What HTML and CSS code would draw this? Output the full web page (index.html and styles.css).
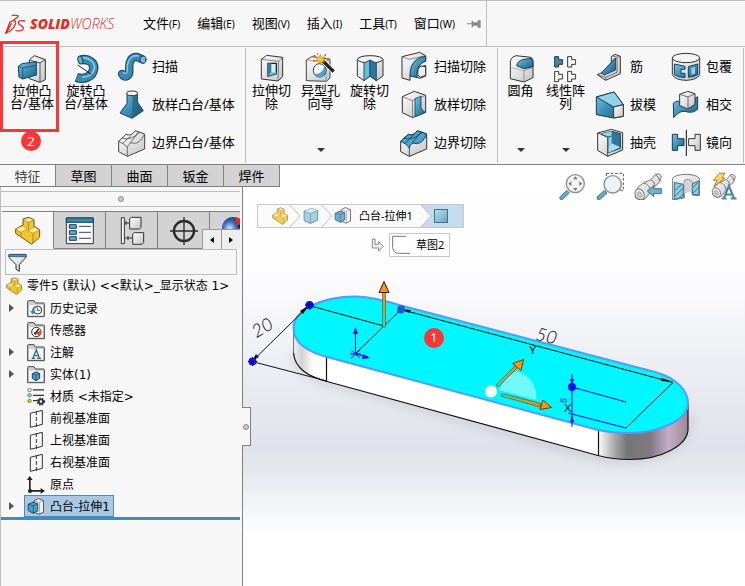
FILE: index.html
```html
<!DOCTYPE html>
<html lang="zh-CN">
<head>
<meta charset="utf-8">
<title>SOLIDWORKS</title>
<link rel="stylesheet" href="styles.css">
</head>
<body>
<svg class="defs" aria-hidden="true">
  <defs>
    <linearGradient id="blue" x1="0" y1="0" x2="1" y2="1"><stop offset="0" stop-color="#7cc6e8"/><stop offset=".5" stop-color="#3d8fb8"/><stop offset="1" stop-color="#23607f"/></linearGradient>
    <linearGradient id="grey" x1="0" y1="0" x2="1" y2="1"><stop offset="0" stop-color="#ffffff"/><stop offset="1" stop-color="#c4c4c4"/></linearGradient>
    <radialGradient id="ball" cx=".35" cy=".5" r=".6"><stop offset="0" stop-color="#d5e6fa"/><stop offset=".5" stop-color="#3569b8"/><stop offset="1" stop-color="#14306a"/></radialGradient>
    <symbol id="part" viewBox="45 165 81 87">
      <path d="M50 204 72 192V174L88 169 105 176V196L122 206V228L98 250 50 217Z" fill="#f2c62c" stroke="#6e5410" stroke-width="3" stroke-linejoin="round"/>
      <path d="M72 176 88 170 105 177 88 184ZM50 204 72 194 84 205 66 214ZM86 208 105 198 122 207 102 217Z" fill="#ffeb9c" stroke="#8a6c18" stroke-width="1.5"/>
      <path d="M88 184V206M102 217V247M66 214V226" stroke="#8a6c18" stroke-width="2" fill="none"/>
    </symbol>
    <symbol id="folder" viewBox="81 75 54 54">
      <path d="M83 84V79Q83 77 86 77H102L106 84H130Q133 84 133 87V125H83Z" fill="#d2d2d2" stroke="#444" stroke-width="3"/>
      <path d="M87 90H129V121H87Z" fill="#f5f5f5"/>
    </symbol>
    <symbol id="plane" viewBox="81 27 54 54">
      <path d="M91 37 127 28V70L91 79Z" fill="#f8f8f8" stroke="#333" stroke-width="3"/>
      <path d="M109 30V80" stroke="#333" stroke-width="3" stroke-dasharray="12 6"/>
    </symbol>
    <symbol id="boss" viewBox="78 289 60 60">
      <path d="M102 298 116 291 133 298V336L118 343 102 337Z" fill="#f4f4f4" stroke="#444" stroke-width="3"/>
      <path d="M102 298 120 304 133 298M120 304V342" fill="none" stroke="#777" stroke-width="2"/>
      <path d="M82 310 98 303 114 308V332L99 340 82 331Z" fill="#4aa0c8" stroke="#173e55" stroke-width="3"/>
      <path d="M82 310 99 315 114 308M99 315V340" fill="none" stroke="#173e55" stroke-width="2"/>
    </symbol>
    <symbol id="cube" viewBox="170 124 56 60">
      <path d="M175 138 200 129 220 136V168L196 179 175 169Z" fill="#8fc7de" stroke="#456b7c" stroke-width="3"/>
      <path d="M175 138 196 146 220 136 200 129Z" fill="#c8e8f4"/><path d="M175 138 196 146 220 136M196 146V179" fill="none" stroke="#456b7c" stroke-width="2"/>
    </symbol>
    <symbol id="chevron" viewBox="0 0 12 22"><path d="M0 -1 11 11 0 23" fill="#fafafa" stroke="#bdbdbd"/></symbol>
    <symbol id="tee" viewBox="0 0 28 36"><path d="M2 2H14V11H26V25H14V33H2Z" stroke-width="3"/></symbol>
    <symbol id="telescope" viewBox="415 390 90 96">
      <path d="M428 440 446 425 468 416 482 400Q492 394 499 405L494 424 474 441 452 473Q430 484 420 466Z" fill="url(#grey)" stroke="#777" stroke-width="3"/>
      <ellipse cx="434" cy="460" rx="13" ry="17" fill="#eee" stroke="#777" stroke-width="3" transform="rotate(-30 434 460)"/>
      <ellipse cx="434" cy="461" rx="6" ry="9" fill="#ccc" stroke="#888" stroke-width="2" transform="rotate(-30 434 461)"/>
      <path d="M446 426Q464 430 466 450M468 416Q480 422 480 436M482 402Q492 406 494 420" fill="none" stroke="#777" stroke-width="3"/>
    </symbol>
  </defs>
</svg>

<div class="app">
  <header class="menubar">
    <div class="logo">
      <svg class="logo-mark" viewBox="12 30 66 66" fill="none" stroke="#d8322c" stroke-width="4" stroke-linecap="round" stroke-linejoin="round"><path d="M37 37H50Q57 37 53 42L41 52M30 57Q36 53 42 53Q50 54 45 66Q38 83 17 91ZM34 62 20 88M74 54Q57 51 55 58Q55 63 62 67Q73 73 69 79Q65 85 48 83" /></svg>
      <span class="logo-text"><b>SOLID</b>WORKS</span>
    </div>
    <nav class="menus">
      <button>文件<small>(F)</small></button>
      <button>编辑<small>(E)</small></button>
      <button>视图<small>(V)</small></button>
      <button>插入<small>(I)</small></button>
      <button>工具<small>(T)</small></button>
      <button>窗口<small>(W)</small></button>
    </nav>
    <button class="pin" aria-label="固定"><svg viewBox="0 0 42 30"><path d="M0 13H14V16H0ZM14 5H18V10H32V4H41V26H32V20H18V25H14Z" fill="#888"/></svg></button>
  </header>

  <section class="ribbon">
    <div class="group g1">
      <button class="big"><svg viewBox="48 156 96 96"><path d="M88 180 103 167 136 179V239L120 247 88 236Z" fill="url(#grey)" stroke="#333" stroke-width="3"/><path d="M88 180 120 189 136 179M120 189V247" fill="none" stroke="#555" stroke-width="3"/><path d="M55 199 66 191 109 185V225L68 237 57 231Z" fill="url(#blue)" stroke="#173e55" stroke-width="3"/><path d="M55 199 68 204 109 196M68 204V237" fill="none" stroke="#173e55" stroke-width="2"/></svg><span>拉伸凸<br>台/基体</span></button>
      <button class="big"><svg viewBox="209 156 96 96" fill="none"><path d="M242 180C262 174 283 187 280 207C277 231 250 240 228 232" stroke="#173e55" stroke-width="28"/><path d="M242 180C262 174 283 187 280 207C277 231 250 240 229 232" stroke="#3989b2" stroke-width="22"/><path d="M246 174C266 172 286 188 282 206C279 222 262 233 246 231" stroke="#8bcdea" stroke-width="5"/><ellipse cx="240" cy="180" rx="7" ry="12" fill="#5cb0d8" stroke="#173e55" stroke-width="3" transform="rotate(-15 240 180)"/><path d="M232 195 273 223" stroke="#222" stroke-width="3"/></svg><span>旋转凸<br>台/基体</span></button>
      <div class="col">
        <button class="row"><svg viewBox="351 153 90 90" fill="none" stroke-linecap="round"><path d="M366 222C374 238 390 228 388 208C386 182 396 168 412 171L426 178" stroke="#173e55" stroke-width="25"/><path d="M366 222C374 238 390 228 388 208C386 182 396 168 412 171L426 178" stroke="#3989b2" stroke-width="19"/><path d="M370 218C384 226 382 210 382 196C385 176 398 164 414 168" stroke="#88cbe8" stroke-width="4"/><ellipse cx="429" cy="179" rx="9" ry="11" fill="#6fbfe2" stroke="#173e55" stroke-width="3"/></svg>扫描</button>
        <button class="row"><svg viewBox="354 267 90 90"><path d="M384 280V310L363 339 399 355 433 332 415 306V280Z" fill="url(#blue)" stroke="#173e55" stroke-width="3"/><path d="M400 288V354L433 332 415 306V282Z" fill="#1f5878" opacity=".6"/><ellipse cx="399.500" cy="280" rx="16" ry="7" fill="#f2f2f2" stroke="#333" stroke-width="3"/></svg>放样凸台/基体</button>
        <button class="row"><svg viewBox="351 381 90 90"><path d="M356 424 378 403Q393 410 406 392L434 402V447L382 469 356 455Z" fill="url(#grey)" stroke="#444" stroke-width="3"/><path d="M356 424Q374 432 382 442Q388 424 403 430Q420 430 434 402M382 442V469M365 414Q392 424 420 396M368 430 394 406M391 429 415 396" fill="none" stroke="#555" stroke-width="2.500"/></svg>边界凸台/基体</button>
      </div>
    </div>
    <div class="group g2">
      <button class="big"><svg viewBox="30 156 96 96"><path d="M46 178 62 166 110 172V230L96 243 46 237Z" fill="url(#grey)" stroke="#333" stroke-width="3"/><path d="M46 178 98 184 110 172M98 184 96 243" fill="none" stroke="#555" stroke-width="2"/><path d="M66 190H91V221L66 228Z" fill="#d7f0fa" stroke="#222" stroke-width="4"/><path d="M66 190H76V217L66 228Z" fill="#2f7fa8"/><path d="M66 228 76 217H91V221Z" fill="#6cbcdf"/></svg><span>拉伸切<br>除</span></button>
      <button class="big"><svg viewBox="180 156 96 96"><path d="M184 180 200 170 255 178V234L244 244 184 242Z" fill="url(#grey)" stroke="#444" stroke-width="3"/><path d="M184 180 243 184V244M243 184 255 178" fill="none" stroke="#777" stroke-width="2"/><ellipse cx="224" cy="211" rx="19" ry="20" fill="#f8fcff" stroke="#173e55" stroke-width="3"/><path d="M208 222Q232 224 238 198Q248 216 232 230Q216 234 208 222Z" fill="#4ba3cc"/><path d="M234 183 266 215" stroke="#fff" stroke-width="14"/><path d="M234 183 266 215" stroke="#222" stroke-width="10"/><path d="m226 163 4 9 10-2-6 8 6 8-10-2-4 9-4-9-10 1 6-7-6-8 10 2Z" fill="#f6c928" stroke="#b76a00" stroke-width="1.500"/><g fill="#e85a1b"><path d="M205 165h6v6h-6zM216 160h4v4h-4zM238 163h5v5h-5zM247 173h5v5h-5zM205 180h5v5h-5z"/></g></svg><span>异型孔<br>向导</span><i class="caret"></i></button>
      <button class="big"><svg viewBox="324 156 96 96"><path d="M334 178V228L354 242 372 228 391 242 411 228V178Z" fill="url(#grey)" stroke="#333" stroke-width="3"/><ellipse cx="372.500" cy="178" rx="38" ry="11" fill="#f5f5f5" stroke="#333" stroke-width="3"/><path d="M354 189 372 180V228L354 242Z" fill="#6cbcdf" stroke="#173e55" stroke-width="2.500"/><path d="M372 180 391 189V242L372 228Z" fill="#2d789f" stroke="#173e55" stroke-width="2.500"/></svg><span>旋转切<br>除</span></button>
      <div class="col">
        <button class="row"><svg viewBox="462 153 90 90"><path d="M471 170 524 157 542 167V183C525 186 520 198 518 204L542 196V228L525 235 495 226V241L471 234Z" fill="url(#grey)" stroke="#333" stroke-width="3"/><path d="M542 169C511 172 494 194 495 228L516 232C515 207 522 190 542 184Z" fill="url(#blue)" stroke="#173e55" stroke-width="3"/><path d="M519 206 528 198 542 200V226L526 232 518 224Z" fill="#eee" stroke="#333" stroke-width="3"/><path d="M471 170 492 178 542 167" fill="none" stroke="#555" stroke-width="2"/></svg>扫描切除</button>
        <button class="row"><svg viewBox="462 267 90 90"><path d="M472 290 508 274 542 286V337L503 353 472 338Z" fill="url(#grey)" stroke="#333" stroke-width="3"/><path d="M472 290 502 302 542 286M502 302 503 353" fill="none" stroke="#555" stroke-width="2"/><path d="M510 296 528 289V322Q532 334 541 337L510 350Z" fill="url(#blue)" stroke="#173e55" stroke-width="2.500"/></svg>放样切除</button>
        <button class="row"><svg viewBox="462 381 90 90"><path d="M467 424 490 403Q504 410 517 392L545 402V447L493 469 467 455Z" fill="url(#grey)" stroke="#333" stroke-width="3"/><path d="M467 424 490 403Q504 410 517 392L545 402Q534 430 514 431Q498 424 493 444Q485 430 467 424Z" fill="#4ba3cc" stroke="#173e55" stroke-width="3"/><path d="M493 444V469M476 414Q502 424 531 397M480 430 506 404M502 429 528 396" fill="none" stroke="#173e55" stroke-width="2.500"/></svg>边界切除</button>
      </div>
    </div>
    <div class="group g3">
      <button class="big"><svg viewBox="27 36 96 96"><path d="M43 62Q47 50 60 47L105 52 111 60V113L84 126 43 116Z" fill="url(#grey)" stroke="#333" stroke-width="3"/><path d="M43 82 84 92" fill="none" stroke="#999" stroke-width="2"/><path d="M62 77Q64 64 80 59L107 55Q111 62 111 80L84 86Z" fill="url(#blue)" stroke="#173e55" stroke-width="3"/><path d="M84 92V126M84 92 111 82" stroke="#777" stroke-width="2"/></svg><span>圆角</span><i class="caret"></i></button>
      <button class="big"><svg viewBox="165 36 96 96" stroke="#333" fill="#fbfbfb"><use href="#tee" x="177" y="48" width="28" height="36" fill="#3989b2"/><use href="#tee" x="216" y="48" width="28" height="36"/><use href="#tee" x="177" y="92" width="28" height="36"/><use href="#tee" x="216" y="92" width="28" height="36"/></svg><span>线性阵<br>列</span><i class="caret"></i></button>
      <div class="col">
        <button class="row"><svg viewBox="300 33 90 90"><path d="M307 104 349 86V50L360 43 376 49V101L332 121Z" fill="url(#grey)" stroke="#333" stroke-width="3"/><path d="M307 104 332 112 366 97V52L376 49M366 52 352 47M332 112V121" fill="none" stroke="#555" stroke-width="2.500"/><path d="M319 99 361 54V90L328 105Z" fill="url(#blue)" stroke="#173e55" stroke-width="3"/></svg>筋</button>
        <button class="row"><svg viewBox="300 147 90 90"><path d="M304 171 357 156 385 194V229L356 234 304 224Z" fill="url(#blue)" stroke="#173e55" stroke-width="3"/><path d="M304 171 357 156 385 194 356 201Z" fill="#8fd3ee" stroke="#173e55" stroke-width="3"/><path d="M356 201 385 194V229L356 234Z" fill="url(#grey)" stroke="#333" stroke-width="3"/></svg>拔模</button>
        <button class="row"><svg viewBox="300 261 90 90"><path d="M308 279 349 268 383 278V330L338 349 308 331Z" fill="url(#grey)" stroke="#333" stroke-width="3"/><path d="M318 281 350 274 376 281V325L340 338V290Z" fill="#2d789f" stroke="#173e55" stroke-width="3"/><path d="M350 274V310L340 322V290L318 281Z" fill="#8fd3ee"/><path d="M350 310 376 322 340 338V322Z" fill="#a6def3"/><path d="M308 279 338 292V349M338 292 350 288" fill="none" stroke="#444" stroke-width="3"/></svg>抽壳</button>
      </div>
      <div class="col">
        <button class="row"><svg viewBox="528 33 90 90"><path d="M532 54V104Q540 120 573 121Q606 120 614 104V54Z" fill="url(#grey)" stroke="#333" stroke-width="3"/><ellipse cx="573" cy="54" rx="41" ry="14" fill="#f4f4f4" stroke="#333" stroke-width="3"/><path d="M538 72 570 79V88H558V100H570V113Q548 112 538 104ZM580 80 608 72V104Q598 111 580 112Z" fill="url(#blue)" stroke="#173e55" stroke-width="3"/><path d="M589 84 600 81V101L589 104Z" fill="#8fd3ee"/></svg>包覆</button>
        <button class="row"><svg viewBox="528 147 90 90"><path d="M535 190Q546 178 558 188Q582 190 608 170V208Q592 222 570 214Q552 212 536 233Z" fill="url(#blue)" stroke="#173e55" stroke-width="3"/><path d="M554 163 578 154 600 161V193L578 207 554 197Z" fill="url(#grey)" stroke="#333" stroke-width="3"/><path d="M554 163 579 171 600 161M579 171V206" fill="none" stroke="#555" stroke-width="2.500"/></svg>相交</button>
        <button class="row"><svg viewBox="528 261 90 90"><path d="M532 283H548V296H567V317H548V331H532Z" fill="url(#blue)" stroke="#173e55" stroke-width="3"/><path d="M616 283H600V296H581V317H600V331H616Z" fill="url(#grey)" stroke="#333" stroke-width="3"/><path d="M574 270V348" stroke="#111" stroke-width="3"/></svg>镜向</button>
      </div>
    </div>
  </section>

  <nav class="tabs">
    <button class="tab active">特征</button>
    <button class="tab">草图</button>
    <button class="tab">曲面</button>
    <button class="tab">钣金</button>
    <button class="tab">焊件</button>
  </nav>

  <aside class="panel">
    <div class="grip"><i class="dot"></i></div>
    <div class="panel-tabs">
      <button class="ptab active" aria-label="设计树"><svg viewBox="39 162 96 90"><use href="#part" x="45" y="165" width="81" height="87"/></svg></button>
      <button class="ptab" aria-label="属性"><svg viewBox="192 162 96 90"><path d="M199 171H280V248H199Z" fill="#fafafa" stroke="#333" stroke-width="3"/><path d="M199 171H280V184H199Z" fill="#3989b2" stroke="#173e55" stroke-width="3"/><path d="M208 191H229V202H208ZM208 209H229V220H208ZM208 227H229V238H208Z" fill="#5aaed4" stroke="#173e55" stroke-width="3"/><path d="M237 196H273M237 214H273M237 232H273" stroke="#444" stroke-width="3"/></svg></button>
      <button class="ptab" aria-label="配置"><svg viewBox="348 162 96 90" fill="#fafafa" stroke="#333" stroke-width="3"><path d="M364 170H373V248H364ZM374 186H390M374 231H398"/><path d="M389 173 394 169H423V199L418 204H389Z" fill="url(#grey)"/><path d="M398 219 403 215H431V245L426 250H398Z" fill="url(#grey)"/><path d="M378 180V192M384 225V237"/></svg></button>
      <button class="ptab" aria-label="尺寸"><svg viewBox="504 162 96 90" fill="none" stroke="#2a2a2a"><circle cx="552" cy="210" r="30" stroke-width="7"/><path d="M510 210H594M552 168V252" stroke-width="4"/></svg></button>
      <button class="ptab last" aria-label="显示"><svg viewBox="663 162 60 90"><circle cx="702" cy="201" r="33" fill="url(#ball)"/><path d="M706 168Q722 168 730 180L716 196Q712 180 706 168Z" fill="#e12a1a"/><path d="M716 196 735 182V210Z" fill="#111"/></svg></button>
      <span class="scroller"><button aria-label="向左"><i class="tri left"></i></button><button aria-label="向右"><i class="tri"></i></button></span>
    </div>
    <label class="filter">
      <svg viewBox="21 279 57 57"><path d="M24 284H75V292L55 314V334L45 328V314L24 292Z" fill="url(#grey)" stroke="#333" stroke-width="3"/><path d="M24 283H75V290H24Z" fill="#3d9ccb" stroke="#173e55" stroke-width="2"/></svg>
      <input type="text" aria-label="过滤器">
    </label>
    <ul class="tree">
      <li class="root"><svg><use href="#part"/></svg><span>零件5 (默认) &lt;&lt;默认&gt;_显示状态 1&gt;</span></li>
      <li><button class="exp" aria-label="展开"></button><span class="node"><svg viewBox="81 75 54 54"><use href="#folder" x="81" y="75" width="54" height="54"/><circle cx="113" cy="105" r="12" fill="#fff" stroke="#333" stroke-width="3"/><path d="M112 97V106H120" fill="none" stroke="#333" stroke-width="2.500"/><path d="M112 93Q95 94 96 109L90 107 98 119 106 108 101 109Q101 99 112 97Z" fill="#3989b2"/></svg>历史记录</span></li>
      <li><span class="node"><svg viewBox="81 75 54 54"><use href="#folder" x="81" y="75" width="54" height="54"/><circle cx="109" cy="105" r="14" fill="#fff" stroke="#333" stroke-width="3"/><path d="M109 105 123 101Q124 114 115 118Z" fill="#e84c1e"/><path d="M105 110 116 96" stroke="#111" stroke-width="4"/><circle cx="106" cy="109" r="4" fill="#333"/></svg>传感器</span></li>
      <li><button class="exp" aria-label="展开"></button><span class="node"><svg viewBox="81 75 54 54"><use href="#folder" x="81" y="75" width="54" height="54"/><path d="M95 118H105M111 118H123M99 118 109 92 118 118M102 110H115" fill="none" stroke="#2f6f94" stroke-width="4"/></svg>注解</span></li>
      <li><button class="exp" aria-label="展开"></button><span class="node"><svg viewBox="81 75 54 54"><use href="#folder" x="81" y="75" width="54" height="54"/><path d="M97 98 109 93 119 98V112L108 119 97 112Z" fill="#4ba3cc" stroke="#173e55" stroke-width="3"/><path d="M97 98 108 103 119 98M108 103V119" fill="none" stroke="#173e55" stroke-width="2"/></svg>实体(1)</span></li>
      <li><span class="node"><svg viewBox="78 335 57 57"><path d="M97 341H132M97 358H132M97 375H112" stroke="#333" stroke-width="4"/><circle cx="86" cy="341" r="5.500" fill="#fff" stroke="#555" stroke-width="2.500"/><circle cx="86" cy="358" r="5.500" fill="#79d0ec" stroke="#2d789f" stroke-width="2.500"/><circle cx="86" cy="376" r="5.500" fill="#f4c21c" stroke="#8a6c18" stroke-width="2.500"/><circle cx="122" cy="378" r="7" fill="none" stroke="#333" stroke-width="6"/><circle cx="122" cy="378" r="11" fill="none" stroke="#333" stroke-width="4" stroke-dasharray="5 4"/></svg>材质 &lt;未指定&gt;</span></li>
      <li><span class="node"><svg><use href="#plane"/></svg>前视基准面</span></li>
      <li><span class="node"><svg><use href="#plane"/></svg>上视基准面</span></li>
      <li><span class="node"><svg><use href="#plane"/></svg>右视基准面</span></li>
      <li><span class="node"><svg viewBox="81 225 54 54" fill="#222"><path d="M87 234H92V267H124V272H87Z"/><path d="M89 225 98 237H81ZM135 270 122 261V278Z"/><circle cx="90" cy="270" r="6"/></svg>原点</span></li>
      <li><button class="exp" aria-label="展开"></button><span class="node selected"><svg><use href="#boss"/></svg>凸台-拉伸1</span></li>
    </ul>
  </aside>

  <main class="viewport">
    <svg class="scene" viewBox="243 165 502 421">
      <defs>
        <linearGradient id="rsteel"><stop offset="0" stop-color="#fff"/><stop offset=".18" stop-color="#aaa"/><stop offset=".32" stop-color="#777"/><stop offset=".58" stop-color="#80787f"/><stop offset=".78" stop-color="#c4adc8"/><stop offset="1" stop-color="#9a8898"/></linearGradient>
        <linearGradient id="lsteel"><stop offset="0" stop-color="#eee"/><stop offset=".25" stop-color="#d2d2d2"/><stop offset=".6" stop-color="#fff"/></linearGradient>
        <linearGradient id="shaft" x1="0" y1="0" x2="0" y2="1"><stop offset="0" stop-color="#f08c14"/><stop offset="1" stop-color="#40d8b0"/></linearGradient>
        <linearGradient id="shaft-up" x1="1" y1="0" x2="0" y2="1"><stop offset="0" stop-color="#f08c14"/><stop offset="1" stop-color="#40d8b0"/></linearGradient>
        <linearGradient id="shaft-down"><stop offset="0" stop-color="#40d8b0"/><stop offset="1" stop-color="#f08c14"/></linearGradient>
        <filter id="soft" x="-10%" y="-10%" width="120%" height="130%"><feGaussianBlur stdDeviation="4"/></filter>
      </defs>
      <path d="M293 353Q295 375 327 383L598 458Q625 465 660 455Q690 443 692 415" fill="none" stroke="#8f93a0" stroke-opacity=".35" stroke-width="5" filter="url(#soft)"/>
      <path d="M293.500 328V353C295 369 308 376 327 381.500L598 455.500C607 458 617 459.500 630 459.500C662 459.500 688 445 688 429V403L598 400 327 340Z" fill="#fff"/>
      <path d="M293.500 328V353C295 369 308 376 327 381.500V350Z" fill="url(#lsteel)"/>
      <path d="M598 425V455.500C607 458 617 459.500 630 459.500C662 459.500 688 445 688 429V403Z" fill="url(#rsteel)"/>
      <path d="M293.500 353C295 369 308 376 327 381.500L598 455.500C607 458 617 459.500 630 459.500C662 459.500 688 445 688 429V403M326.500 357V381M598.500 430V455" fill="none" stroke="#111" stroke-width="1.200"/>
      <path d="M293.500 353V330" stroke="#777" stroke-width="1"/>
      <path d="M401 305.500 655 372C676 378 688 390 688 403C688 420 660 433 628 433C617 433 607 432 598 430L327 357C305 351 293.500 341 293.500 328C293.500 310 322 296 357 296.500C372 297 385 300.500 401 305.500Z" fill="#00f7ff" stroke="#539df5" stroke-width="2"/>
      <g stroke="#111" stroke-width="1" fill="none"><path d="M309 305.500 252 361.500 327 381M309 305.500 384 326M355 354 401 309.500 673 382.500 626 428"/></g>
      <path d="m401 309 10 1-2 3ZM673 382l-11-4-1 3ZM309 305l-9 6 3 3ZM252 361l7-4-3-3Z" fill="#111"/>
      <g fill="#1414e0"><circle cx="309.500" cy="305" r="4"/><circle cx="252.500" cy="361.500" r="4"/><circle cx="401" cy="309.500" r="4" fill="#1e5cc8"/><circle cx="572" cy="387" r="4"/></g>
      <path d="M305 305H314M309.500 301V310M248 361.500H257M252.500 357V366" stroke="#00008c" stroke-width="1"/>
      <g stroke="#0808e8" fill="#0808e8"><path d="M355.500 354V330M355.500 354 368 357M351 350 360 358M351 358 360 350M350 354H361M572 374V427M572 387 626 402M568 413 626 428" fill="none"/><path d="m355.500 327-2.500 7h5ZM370 358l-7-4-1 5ZM572 385l-2-6h4ZM572 415l-2 7h4Z" stroke="none"/></g>
      <path d="M382.500 292H385.500V327H382.500Z" fill="url(#shaft)" stroke="#605020" stroke-width=".6"/>
      <path d="M384 281.500 389 292.500H379Z" fill="#ff9411" stroke="#222" stroke-width="1"/>
      <path d="M499 390Q505 377 517 371Q537 378 536.500 400Z" fill="#70f9ff"/>
      <path d="M496 385 516 365 518 367 498 387Z" fill="url(#shaft-up)" stroke="#705820" stroke-width=".8"/>
      <path d="M502 393.500 541 403.500 540 407 501 396Z" fill="url(#shaft-down)" stroke="#705820" stroke-width=".8"/>
      <path d="M523.500 359.500 512.500 363.500 521 370.500ZM551.500 407.500 543 400 540 409.500Z" fill="#ff9411" stroke="#6b3d08" stroke-width="1"/>
      <circle cx="491" cy="391.500" r="6" fill="#fff"/>
      <g class="dims"><text x="252" y="334" transform="rotate(-30 262 328)">20</text><text x="536" y="342" transform="rotate(14 546 336)">50</text><text class="axis" x="529" y="354">Y</text><text class="axis" x="564" y="412">X</text><text class="five" x="560" y="402" transform="rotate(-75 564 399)">5</text></g>
      <g class="badge"><circle cx="434" cy="338" r="10"/><text x="434" y="342">1</text></g>
    </svg>
    <div class="view-tools">
      <button aria-label="整屏显示"><svg viewBox="189 393 84 84"><path d="M216 448 223 456 202 476Q194 478 194 468Z" fill="#6ba7c0" stroke="#4e7f95" stroke-width="3"/><circle cx="241" cy="428" r="27" fill="#f4f6f6" stroke="#8a8f90" stroke-width="4"/><path d="m241 406 7 9h-14ZM241 450l7-9h-14ZM220 428l9-7v14ZM262 428l-9-7v14Z" fill="#777"/></svg></button>
      <button aria-label="局部放大"><svg viewBox="303 393 84 84"><path d="M334 397H385V448H374M334 397V406" fill="none" stroke="#555" stroke-width="3" stroke-dasharray="8 5"/><path d="M328 448 336 456 314 476Q305 478 306 468Z" fill="#6ba7c0" stroke="#4e7f95" stroke-width="3"/><circle cx="353" cy="430" r="26" fill="#e8f1f3" fill-opacity=".9" stroke="#8a8f90" stroke-width="4"/></svg></button>
      <button aria-label="上一视图"><svg viewBox="417 393 84 84"><use href="#telescope" x="415" y="390" width="90" height="96"/><path d="M457 450 476 434V443H499V458H476V467Z" fill="#6eb3cf" stroke="#3f7189" stroke-width="3"/></svg></button>
      <button aria-label="剖面视图"><svg viewBox="531 393 84 84"><path d="M533 412Q540 401 574 400Q606 401 613 412V464L592 462V424Q590 416 574 416Q568 416 568 424V470L533 477Z" fill="url(#grey)" stroke="#777" stroke-width="3"/><path d="M568 424Q580 412 592 424V456Q580 450 568 460Z" fill="#d4d4d4"/><path d="M538 424 565 430V470L538 475ZM592 428 612 420V462L592 460Z" fill="#8ccbe2" stroke="#3f7189" stroke-width="3"/><path d="M540 448 560 430M540 465 564 442M552 472 564 460M594 440 608 425M594 456 611 440" stroke="#3f7189" stroke-width="3"/></svg></button>
      <button aria-label="视图定向"><svg viewBox="642 390 90 96"><use href="#telescope" x="642" y="390" width="90" height="96"/><path d="M672 394H690L681 411H690L652 440 664 418H650Z" fill="#ffd46b" stroke="#a47726" stroke-width="3"/><path d="M679 481H696M710 481H730M686 481 704 438 722 481M692 467H716" fill="none" stroke="#4386a6" stroke-width="7"/></svg></button>
    </div>
    <nav class="crumbs">
      <button class="c1" aria-label="零件"><svg><use href="#part"/></svg></button>
      <button class="c2" aria-label="实体"><svg class="sep"><use href="#chevron"/></svg><svg><use href="#cube"/></svg></button>
      <button class="c3"><svg class="sep"><use href="#chevron"/></svg><svg><use href="#boss"/></svg>凸台-拉伸1</button>
      <button class="c4" aria-label="面"><svg class="sep"><use href="#chevron"/></svg><i class="face"></i></button>
    </nav>
    <div class="sub">
      <svg class="turn" viewBox="380 218 40 42"><path d="M383 221H391V237H402V229L416 243 402 257V248H383Z" fill="#eee" stroke="#888" stroke-width="3"/></svg>
      <button><svg viewBox="440 210 60 60"><path d="M482 214H442V248Q444 265 462 265H494" fill="none" stroke="#777" stroke-width="3"/></svg>草图2</button>
    </div>
    <div class="splitter"><i class="dot"></i></div>
  </main>

  <div class="callout"></div>
  <span class="step">2</span>
</div>
</body>
</html>
```
FILE: styles.css
```css
* { box-sizing: border-box; }
body {
  margin: 0;
  background: #f7f7f7;
  color: #000;
  font: 13px/16px "Noto Sans", "Noto Sans CJK SC", sans-serif;
}
button {
  margin: 0;
  padding: 0;
  border: 0;
  background: none;
  color: inherit;
  font: inherit;
  white-space: nowrap;
}
svg { display: block; flex: none; }
.defs { position: absolute; width: 0; height: 0; }

.app {
  position: relative;
  display: grid;
  grid-template: auto auto 22px 1fr / 242px 1fr;
  min-height: 100vh;
}

/* menu bar */
.menubar {
  grid-column: 1 / -1;
  display: flex;
  align-items: center;
  height: 47px;
  padding-left: 4px;
  border-top: 1px solid #bdbdbd;
  border-bottom: 1px solid #bdbdbd;
}
.logo { display: flex; align-items: center; gap: 4px; width: 139px; }
.logo-mark { width: 22px; height: 22px; }
.logo-text { color: #d8322c; font: italic 300 14px/16px "Open Sans", sans-serif; }
.logo-text b { font-weight: 800; }
.menus { display: flex; gap: 17px; }
.menus small { font-size: 10px; }
.pin { display: flex; align-items: center; align-self: stretch; margin-left: 12px; padding-right: 5px; border-right: 1px solid #bdbdbd; }
.pin svg { width: 14px; height: 10px; }

/* ribbon */
.ribbon {
  grid-column: 1 / -1;
  display: flex;
  height: 118px;
  padding-right: 1px;
  border-bottom: 1px solid #808080;
}
.group {
  display: flex;
  align-items: flex-start;
  height: 115px;
  margin-top: 1px;
  border-right: 1px solid #bdbdbd;
}
.g1 { width: 246px; padding-left: 5px; }
.g2 { width: 252px; padding-left: 1px; }
.g3 { width: 246px; }
.big {
  display: flex;
  flex-direction: column;
  align-items: center;
  width: 54px;
  height: 115px;
  padding-top: 4px;
  line-height: 13px;
}
.g2 .big { width: 49px; }
.g3 .big { width: 45px; }
.big svg { width: 32px; height: 32px; }
.caret {
  margin: auto 0 11px;
  border: 4px solid transparent;
  border-top-color: #333;
  border-bottom: 0;
}
.col { display: flex; flex-direction: column; margin: -1px 0 0 4px; }
.g2 .col { margin-left: 5px; }
.g3 .col { width: 69px; margin-left: 7px; }
.row { display: flex; align-items: center; gap: 5px; height: 38px; }
.row svg { width: 30px; height: 30px; }

/* command tabs */
.tabs { grid-area: 3 / 1 / 4 / 3; z-index: 2; display: flex; justify-self: start; }
.tab {
  width: 56px;
  background: #d3d3d3;
  border: 1px solid #808080;
  border-width: 0 1px 1px 0;
}
.tab.active { background: #f7f7f7; color: #444; }

/* feature manager panel */
.panel { grid-area: 4 / 1; border-left: 1px solid #bdbdbd; }
.grip {
  display: flex;
  align-items: center;
  justify-content: center;
  height: 16px;
  margin: 4px 2px 4px 0;
  border: 1px solid #bdbdbd;
  border-width: 1px 0;
}
.dot { width: 6px; height: 6px; border: 1px solid #888; border-radius: 50%; background: #ccc; }
.panel-tabs { position: relative; display: flex; height: 38px; margin: 0 2px 0 1px; overflow: hidden; }
.ptab {
  display: flex;
  flex: none;
  align-items: center;
  justify-content: center;
  width: 52px;
  background: #d3d3d3;
  border: 1px solid #808080;
  border-width: 1px 1px 1px 0;
}
.ptab.active { background: #f7f7f7; border-bottom-color: #f7f7f7; }
.ptab.last { justify-content: flex-end; width: 30px; border-right: 0; }
.ptab svg { width: 32px; height: 30px; }
.ptab.last svg { width: 20px; }
.scroller { position: absolute; right: 0; bottom: 0; display: flex; }
.scroller button {
  display: grid;
  place-items: center;
  width: 19px;
  height: 20px;
  background: #eee;
  border: 1px solid #999;
  border-width: 1px 0 0 1px;
}
.tri { border: 3px solid transparent; border-left: 4px solid #000; border-right: 0; }
.tri.left { border-right: 4px solid #000; border-left: 0; }
.filter {
  display: flex;
  align-items: center;
  height: 26px;
  margin: 0 5px 0 4px;
  padding-left: 2px;
  border: 1px solid #bdbdbd;
}
.filter svg { width: 19px; height: 19px; }
.filter input { flex: 1; min-width: 0; border: 0; background: none; outline: none; }
.tree {
  margin: 0 2px 0 0;
  padding: 0;
  list-style: none;
  font: 12px/16px "DejaVu Sans", "Noto Sans CJK SC", sans-serif;
  border-bottom: 3px solid #3c8dc4;
}
.tree li { display: flex; align-items: center; height: 22px; padding-left: 23px; }
.tree li.root { padding-left: 4px; gap: 4px; white-space: nowrap; }
.tree svg { width: 18px; height: 18px; }
.exp {
  width: 5px;
  height: 8px;
  margin: 0 10px 0 -15px;
  border: 4px solid transparent;
  border-left: 5px solid #555;
  border-right: 0;
}
.node { display: flex; align-items: center; gap: 5px; height: 22px; padding: 1px 4px 0 3px; }
.selected { padding: 1px 3px 0 2px; background: #a8c8e4; border: 1px solid #4a8db8; }

/* graphics area */
.viewport {
  grid-area: 3 / 2 / 5 / 3;
  position: relative;
  display: flex;
  flex-direction: column;
  border-left: 1px solid #808080;
  background: linear-gradient(#fff 0%, #fdfdfe 25%, #edeef3 48%, #dfe2eb 67%, #e4e7ee 72%, #fff 88%);
}
.scene { position: absolute; top: 0; left: 0; width: 502px; height: 421px; }
.scene text { font-family: "Noto Sans", sans-serif; }
.scene .dims text { font: italic 300 18px Lato, sans-serif; }
.scene .dims .axis { font: 11px "Liberation Sans", sans-serif; }
.scene .dims .five { font: 9px "Liberation Sans", sans-serif; fill: #0808e8; }
.scene .badge circle { fill: #fb3636; }
.scene .badge text { fill: #fff; font-size: 12px; text-anchor: middle; }
.view-tools { position: relative; display: flex; gap: 10px; align-items: flex-start; justify-content: flex-end; height: 39px; padding: 7px 7px 0 0; }
.view-tools svg { width: 28px; height: 28px; }
.crumbs {
  position: relative;
  display: flex;
  align-self: flex-start;
  height: 24px;
  margin-left: 14px;
  border: 1px solid #c8c8c8;
  background: #fafafa;
  font-size: 11px;
}
.crumbs button { position: relative; display: flex; align-items: center; gap: 6px; height: 22px; }
.crumbs svg { width: 20px; height: 18px; opacity: .8; }
.crumbs .sep { position: absolute; top: 0; left: 0; width: 12px; height: 22px; opacity: 1; }
.crumbs .c1 { width: 31px; padding-left: 12px; }
.crumbs .c2 { width: 32px; padding-left: 12px; }
.crumbs .c3 { width: 99px; padding-left: 12px; }
.crumbs .c4 { width: 43px; padding-left: 14px; background: #c4dcee; }
.face { width: 14px; height: 14px; border: 1px solid #3f7189; background: linear-gradient(135deg, #b5e0ee, #6ba7c0); }
.sub { position: relative; display: flex; align-items: center; gap: 4px; margin: 5px 0 0 128px; font-size: 11px; }
.sub .turn { width: 14px; height: 14px; }
.sub button { display: flex; align-items: center; gap: 4px; width: 61px; height: 24px; padding-left: 2px; border: 1px solid #c8c8c8; background: #fff; }
.sub button svg { width: 20px; height: 20px; }
.splitter {
  position: absolute;
  top: 242px;
  left: -1px;
  display: grid;
  place-items: center;
  width: 9px;
  height: 39px;
  background: #f7f7f7;
  border: 1px solid #808080;
  border-left: 0;
}

/* tutorial marks */
.callout { position: absolute; top: 41px; left: 0; width: 59px; height: 91px; border: 3px solid #fb3636; }
.step {
  position: absolute;
  top: 131px;
  left: 21px;
  width: 20px;
  height: 20px;
  border-radius: 50%;
  background: #fb3636;
  color: #fff;
  line-height: 20px;
  text-align: center;
}
```
